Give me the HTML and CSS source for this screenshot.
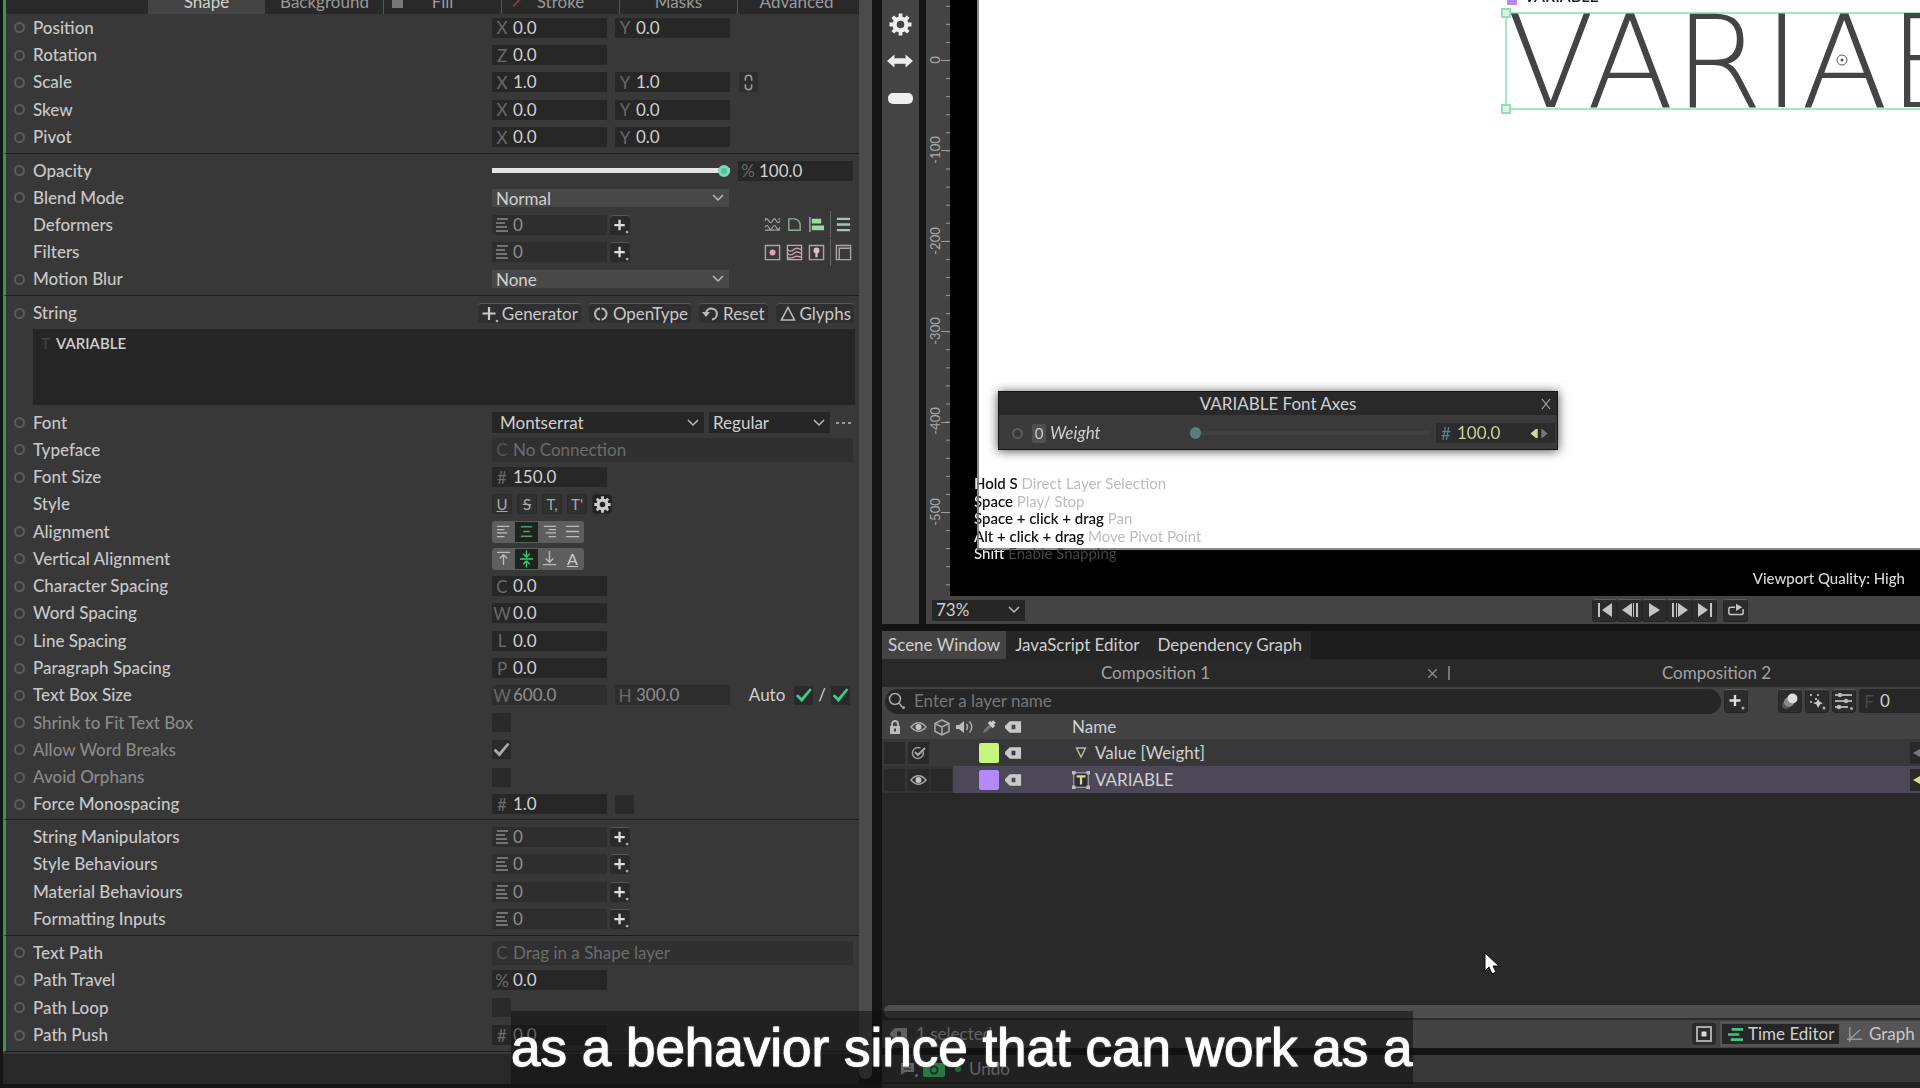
FILE: index.html
```html
<!DOCTYPE html>
<html lang="en">
<head>
<meta charset="utf-8">
<title>Scene – Composition 1</title>
<link rel="stylesheet" href="styles.css">
</head>
<body>
<svg class="sprite" aria-hidden="true">
  <symbol id="chevron" viewBox="0 0 12 8"><path d="M1 1l5 5 5-5" fill="none" stroke="#bbb" stroke-width="1.5"/></symbol>
  <symbol id="list" viewBox="0 0 14 14"><path d="M2 1h11M1 5h9M1 9h11M1 13h12" stroke="#8a8a8a" stroke-width="1.3"/></symbol>
  <symbol id="plus" viewBox="0 0 18 18"><path d="M8 3v11M2.500 8.500h11" stroke="#ddd" stroke-width="2.400"/><circle cx="16" cy="16" r="1.500" fill="#aaa"/></symbol>
  <symbol id="gear" viewBox="0 0 24 24"><g fill="none" stroke="currentColor"><circle cx="12" cy="12" r="6.200" stroke-width="4.500"/><path d="M12 0.500v4M12 19.500v4M0.500 12h4M19.500 12h4M3.900 3.900l2.800 2.800M17.300 17.300l2.800 2.800M20.100 3.900l-2.800 2.800M6.700 17.300l-2.800 2.800" stroke-width="4"/></g></symbol>
  <symbol id="tag" viewBox="0 0 18 12"><path fill-rule="evenodd" d="M5 0h12v12H5L0 7V5zM7 3.500v5h4v-5z" fill="#c9c9c9"/></symbol>
  <symbol id="eye" viewBox="0 0 18 12"><path d="M1 6Q9-3 17 6Q9 15 1 6z" fill="none" stroke="#aaa" stroke-width="1.500"/><circle cx="9" cy="6" r="3.200" fill="#c4c4c4"/></symbol>
</svg>

<div class="app">
  <aside class="inspector">
    <div class="inspector-main">
      <nav class="tabs">
        <span class="tab-spacer"></span>
        <button class="tab active">Shape</button>
        <button class="tab">Background</button>
        <button class="tab"><i class="sq"></i>Fill</button>
        <button class="tab"><i class="slash"></i>Stroke</button>
        <button class="tab">Masks</button>
        <button class="tab">Advanced</button>
      </nav>

      <section class="group five">
        <div class="row"><i class="dot"></i><label for="px">Position</label><div class="ctl"><span class="num"><b>X</b><input id="px" value="0.0"></span><span class="num"><b>Y</b><input aria-label="Position Y" value="0.0"></span></div></div>
        <div class="row"><i class="dot"></i><label for="rz">Rotation</label><div class="ctl"><span class="num"><b>Z</b><input id="rz" value="0.0"></span></div></div>
        <div class="row"><i class="dot"></i><label for="sx">Scale</label><div class="ctl"><span class="num"><b>X</b><input id="sx" value="1.0"></span><span class="num"><b>Y</b><input aria-label="Scale Y" value="1.0"></span><button class="link" aria-label="Link scale"><svg viewBox="0 0 10 18"><path d="M1.500 7V4.500a3.500 3.500 0 0 1 7 0V7M1.500 11v2.500a3.500 3.500 0 0 0 7 0V11" fill="none" stroke="#999" stroke-width="1.800"/></svg></button></div></div>
        <div class="row"><i class="dot"></i><label for="kx">Skew</label><div class="ctl"><span class="num"><b>X</b><input id="kx" value="0.0"></span><span class="num"><b>Y</b><input aria-label="Skew Y" value="0.0"></span></div></div>
        <div class="row"><i class="dot"></i><label for="vx">Pivot</label><div class="ctl"><span class="num"><b>X</b><input id="vx" value="0.0"></span><span class="num"><b>Y</b><input aria-label="Pivot Y" value="0.0"></span></div></div>
      </section>

      <section class="group five">
        <div class="row"><i class="dot"></i><label for="op">Opacity</label><div class="ctl"><input class="slider" id="op" type="range" value="100"><span class="num"><b>%</b><input aria-label="Opacity value" value="100.0"></span></div></div>
        <div class="row"><i class="dot"></i><label for="bm">Blend Mode</label><div class="ctl"><span class="pick light"><select id="bm"><option>Normal</option></select><svg class="chev"><use href="#chevron"/></svg></span></div></div>
        <div class="row"><i></i><label for="df">Deformers</label><div class="ctl"><span class="num off"><svg><use href="#list"/></svg><input id="df" value="0"></span><button class="add" aria-label="Add deformer"><svg><use href="#plus"/></svg></button>
          <span class="quick">
            <button aria-label="Wave"><svg viewBox="0 0 18 18"><path d="M1 5q2-4 4 0t4 0 4 0 4 0M1 3h2M15 3h2M1 12q2-4 4 0t4 0 4 0 4 0M1 15h16" fill="none" stroke="#9fa8a0" stroke-width="1.200"/></svg></button>
            <button aria-label="Bevel"><svg viewBox="0 0 18 18"><path d="M3 3h6q6 1 6 7v5H3z" fill="none" stroke="#93a895" stroke-width="1.500"/></svg></button>
            <button aria-label="Align"><svg viewBox="0 0 18 18"><path d="M2 1v16" stroke="#9db09f" stroke-width="1.500"/><path d="M4 3h10v5H4zM4 10h13v5H4z" fill="#9bdc9d"/></svg></button>
            <button class="split" aria-label="All deformers"><svg viewBox="0 0 18 18"><path d="M2 3h14M2 9h14M2 15h14" stroke="#a7c3af" stroke-width="2.400"/></svg></button>
          </span></div></div>
        <div class="row"><i></i><label for="fi">Filters</label><div class="ctl"><span class="num off"><svg><use href="#list"/></svg><input id="fi" value="0"></span><button class="add" aria-label="Add filter"><svg><use href="#plus"/></svg></button>
          <span class="quick">
            <button aria-label="Blur"><svg viewBox="0 0 18 18"><path d="M1.500 1.500h15v15h-15z" fill="none" stroke="#b3a0a5" stroke-width="1.500"/><circle cx="9" cy="9" r="3.200" fill="#dca4ae"/></svg></button>
            <button aria-label="Displace"><svg viewBox="0 0 18 18"><path d="M1.500 1.500h15v15h-15zM2 6q3 3 6 0t8 0M2 10q3 3 6 0t8 0M2 14q3 2 6 0t8 0" fill="none" stroke="#c9a4ad" stroke-width="1.400"/></svg></button>
            <button aria-label="Glow"><svg viewBox="0 0 18 18"><path d="M1.500 1.500h15v15h-15z" fill="none" stroke="#b3a0a5" stroke-width="1.500"/><circle cx="9" cy="7" r="3.200" fill="#e0bfc6"/><path d="M9 8v6" stroke="#e0bfc6" stroke-width="2.400"/></svg></button>
            <button class="split" aria-label="All filters"><svg viewBox="0 0 18 18"><path d="M1.500 1.500h15v15h-15zM4.500 16V4.500H16" fill="none" stroke="#ada3a6" stroke-width="1.500"/></svg></button>
          </span></div></div>
        <div class="row"><i class="dot"></i><label for="mb">Motion Blur</label><div class="ctl"><span class="pick light"><select id="mb"><option>None</option></select><svg class="chev"><use href="#chevron"/></svg></span></div></div>
      </section>

      <section class="group text">
        <div class="row string"><i class="dot"></i><label for="str">String</label>
          <div class="actions">
            <button><svg viewBox="0 0 18 18"><path d="M8 2v13M1.500 8.500h13" stroke="#ccc" stroke-width="2.200"/><circle cx="16" cy="16" r="1.300" fill="#aaa"/></svg>Generator</button>
            <button><svg viewBox="0 0 18 18"><path d="M8 3.500a5 5.500 0 1 0 0 11M9.500 3.500a5 5.500 0 0 1 0 11" fill="none" stroke="#bbb" stroke-width="2"/></svg>OpenType</button>
            <button><svg viewBox="0 0 18 18"><path d="M4 8a5.500 5.500 0 1 1 6 6.500" fill="none" stroke="#bbb" stroke-width="2"/><path d="M0 7h8l-4 5z" fill="#bbb"/></svg>Reset</button>
            <button><svg viewBox="0 0 18 18"><path d="M9 2.500L15.500 15h-13z" fill="none" stroke="#bbb" stroke-width="1.600"/></svg>Glyphs</button>
          </div></div>
        <div class="string-box"><span>T</span><textarea id="str">VARIABLE</textarea></div>
        <div class="rows">
          <div class="row"><i class="dot"></i><label for="fo">Font</label><div class="ctl tight"><span class="pick dark family"><select id="fo"><option>Montserrat</option></select><svg class="chev"><use href="#chevron"/></svg></span><span class="pick dark weight"><select aria-label="Font style"><option>Regular</option></select><svg class="chev"><use href="#chevron"/></svg></span><button class="more" aria-label="More fonts"><svg viewBox="0 0 16 4"><path d="M1 1h3v2H1zM7 1h3v2H7zM13 1h3v2h-3z" fill="#999"/></svg></button></div></div>
          <div class="row"><i class="dot"></i><label for="tf">Typeface</label><div class="ctl"><span class="num conn"><b>C</b><input id="tf" placeholder="No Connection"></span></div></div>
          <div class="row"><i class="dot"></i><label for="fs">Font Size</label><div class="ctl"><span class="num"><b>#</b><input id="fs" value="150.0"></span></div></div>
          <div class="row"><i></i><span class="name">Style</span><div class="ctl styles">
            <button><u>U</u></button><button><s>S</s></button><button>T,</button><button>T'</button><button class="set" aria-label="Style settings"><svg class="g"><use href="#gear"/></svg></button></div></div>
          <div class="row"><i class="dot"></i><span class="name">Alignment</span><div class="ctl"><span class="seg">
            <button aria-label="Left"><svg viewBox="0 0 16 14"><path d="M1 1.500h13M1 5h8M1 8.500h11M1 12.500h8"/></svg></button>
            <button class="on" aria-label="Centre"><svg viewBox="0 0 16 14"><path d="M2 2h12M4.500 7h7M2 12h12"/></svg></button>
            <button aria-label="Right"><svg viewBox="0 0 16 14"><path d="M2 1.500h13M7 5h8M4 8.500h11M7 12.500h8"/></svg></button>
            <button aria-label="Justify"><svg viewBox="0 0 16 14"><path d="M1 1.500h14M1 7h14M1 12.500h14"/></svg></button></span></div></div>
          <div class="row"><i class="dot"></i><span class="name">Vertical Alignment</span><div class="ctl"><span class="seg">
            <button aria-label="Top"><svg viewBox="0 0 16 16"><path d="M1 1.500h14M8 15V4M4 8l4-4 4 4"/></svg></button>
            <button class="on bright" aria-label="Middle"><svg viewBox="0 0 16 18"><path d="M1 9h14M8 0v7M8 18v-7M4.500 3.500L8 7l3.500-3.500M4.500 14.500L8 11l3.500 3.500"/></svg></button>
            <button aria-label="Bottom"><svg viewBox="0 0 16 16"><path d="M1 14.500h14M8 0v12M4 8l4 4 4-4"/></svg></button>
            <button><u>A</u></button></span></div></div>
          <div class="row"><i class="dot"></i><label for="cs">Character Spacing</label><div class="ctl"><span class="num"><b>C</b><input id="cs" value="0.0"></span></div></div>
          <div class="row"><i class="dot"></i><label for="ws">Word Spacing</label><div class="ctl"><span class="num"><b>W</b><input id="ws" value="0.0"></span></div></div>
          <div class="row"><i class="dot"></i><label for="ls">Line Spacing</label><div class="ctl"><span class="num"><b>L</b><input id="ls" value="0.0"></span></div></div>
          <div class="row"><i class="dot"></i><label for="ps">Paragraph Spacing</label><div class="ctl"><span class="num"><b>P</b><input id="ps" value="0.0"></span></div></div>
          <div class="row"><i class="dot"></i><label for="tw">Text Box Size</label><div class="ctl"><span class="num off"><b>W</b><input id="tw" value="600.0"></span><span class="num off"><b>H</b><input aria-label="Text box height" value="300.0"></span><span class="auto">Auto <input type="checkbox" class="green" aria-label="Auto width" checked>/<input type="checkbox" class="green" aria-label="Auto height" checked></span></div></div>
          <div class="row dim"><i class="dot"></i><label for="sh">Shrink to Fit Text Box</label><div class="ctl"><input type="checkbox" id="sh"></div></div>
          <div class="row dim"><i class="dot"></i><label for="aw">Allow Word Breaks</label><div class="ctl"><input type="checkbox" id="aw" checked></div></div>
          <div class="row dim"><i class="dot"></i><label for="ao">Avoid Orphans</label><div class="ctl"><input type="checkbox" id="ao"></div></div>
          <div class="row"><i class="dot"></i><label for="fm">Force Monospacing</label><div class="ctl"><span class="num"><b>#</b><input id="fm" value="1.0"></span><input type="checkbox" aria-label="Force monospacing on"></div></div>
        </div>
      </section>

      <section class="group four">
        <div class="row"><i></i><label for="sm">String Manipulators</label><div class="ctl"><span class="num off"><svg><use href="#list"/></svg><input id="sm" value="0"></span><button class="add" aria-label="Add string manipulator"><svg><use href="#plus"/></svg></button></div></div>
        <div class="row"><i></i><label for="sb">Style Behaviours</label><div class="ctl"><span class="num off"><svg><use href="#list"/></svg><input id="sb" value="0"></span><button class="add" aria-label="Add style behaviour"><svg><use href="#plus"/></svg></button></div></div>
        <div class="row"><i></i><label for="ma">Material Behaviours</label><div class="ctl"><span class="num off"><svg><use href="#list"/></svg><input id="ma" value="0"></span><button class="add" aria-label="Add material behaviour"><svg><use href="#plus"/></svg></button></div></div>
        <div class="row"><i></i><label for="fn">Formatting Inputs</label><div class="ctl"><span class="num off"><svg><use href="#list"/></svg><input id="fn" value="0"></span><button class="add" aria-label="Add formatting input"><svg><use href="#plus"/></svg></button></div></div>
      </section>

      <section class="group four">
        <div class="row"><i class="dot"></i><label for="tp">Text Path</label><div class="ctl"><span class="num conn"><b>C</b><input id="tp" placeholder="Drag in a Shape layer"></span></div></div>
        <div class="row"><i class="dot"></i><label for="pt">Path Travel</label><div class="ctl"><span class="num"><b>%</b><input id="pt" value="0.0"></span></div></div>
        <div class="row"><i class="dot"></i><label for="pl">Path Loop</label><div class="ctl"><input type="checkbox" id="pl"></div></div>
        <div class="row"><i class="dot"></i><label for="pp">Path Push</label><div class="ctl"><span class="num"><b>#</b><input id="pp" value="0.0"></span></div></div>
      </section>
      <div class="inspector-foot"></div>
    </div>
    <div class="scroll-v"></div>
  </aside>

  <main class="work">
    <section class="viewport">
      <div class="tools">
        <button aria-label="Settings"><svg width="23" height="23"><use href="#gear"/></svg></button>
        <button aria-label="Fit width"><svg width="26" height="16" viewBox="0 0 28 16"><path d="M0 8l8-7v4h12V1l8 7-8 7v-4H8v4z" fill="#eee"/></svg></button>
        <button aria-label="Background"><svg width="25" height="11" viewBox="0 0 25 11"><rect width="25" height="11" rx="5" fill="#eee"/></svg></button>
      </div>
      <div class="stage">
        <div class="stage-top">
          <svg class="ruler" width="24">
            <defs><pattern id="ticks" width="24" height="18.080" patternUnits="userSpaceOnUse" y="60"><path d="M20 .5h4" stroke="#999"/></pattern></defs>
            <rect width="24" height="590" fill="url(#ticks)"/>
            <path d="M15 60.500h9M15 150.500h9M15 241.500h9M15 331.500h9M15 422.500h9M15 512.500h9" stroke="#999"/>
            <g class="nums">
              <text transform="translate(14 60) rotate(-90)">0</text>
              <text transform="translate(14 150) rotate(-90)">-100</text>
              <text transform="translate(14 241) rotate(-90)">-200</text>
              <text transform="translate(14 331) rotate(-90)">-300</text>
              <text transform="translate(14 421) rotate(-90)">-400</text>
              <text transform="translate(14 512) rotate(-90)">-500</text>
            </g>
          </svg>
          <div class="canvas">
            <div class="artboard"></div>
            <div class="layer-tag"><i></i>VARIABLE</div>
            <div class="selection"><span class="word">VARIABLE</span><i class="h tl"></i><i class="h bl"></i><svg class="pivot" viewBox="0 0 12 12"><circle cx="6" cy="6" r="5" fill="none" stroke="#555"/><circle cx="6" cy="6" r="1.500" fill="#555"/></svg></div>
            <ul class="hints">
              <li><b>Hold S</b> Direct Layer Selection</li>
              <li><b>Space</b> Play/ Stop</li>
              <li><b>Space + click + drag</b> Pan</li>
              <li><b>Alt + click + drag</b> Move Pivot Point</li>
              <li><b>Shift</b> Enable Snapping</li>
            </ul>
            <div class="quality">Viewport Quality: High</div>
            <div class="axes">
              <header>VARIABLE Font Axes<button aria-label="Close"><svg viewBox="0 0 10 10"><path d="M1 0l8 10M9 0L1 10" stroke="#aaa" stroke-width="1.200"/></svg></button></header>
              <div class="axis"><i class="dot"></i><span class="key">0</span><label for="wg">Weight</label><input id="wg" type="range" value="0"><span class="num"><b>#</b><input aria-label="Weight value" value="100.0"><svg viewBox="0 0 20 10"><path d="M8 0v10H6L0 5l6-5z" fill="#d5d896"/><path d="M12 0v10h1l6-5-6-5z" fill="#777"/></svg></span></div>
            </div>
          </div>
        </div>
        <div class="transport">
          <span class="pick dark zoom"><select aria-label="Zoom"><option>73%</option></select><svg class="chev"><use href="#chevron"/></svg></span>
          <div class="play">
            <button aria-label="First frame"><svg viewBox="0 0 16 14"><path d="M1 0h2v14H1zM15 0v14L5 7z"/></svg></button>
            <button aria-label="Previous frame"><svg viewBox="0 0 16 14"><path d="M10 0v14L0 7zM11 0h1v14h-1zM14 0h2v14h-2z"/></svg></button>
            <button aria-label="Play"><svg viewBox="0 0 16 14"><path d="M2 0v14l11-7z"/></svg></button>
            <button aria-label="Next frame"><svg viewBox="0 0 16 14"><path d="M6 0v14l10-7zM0 0h2v14H0zM4 0h1v14H4z"/></svg></button>
            <button aria-label="Last frame"><svg viewBox="0 0 16 14"><path d="M13 0h2v14h-2zM1 0v14l10-7z"/></svg></button>
            <button class="loop" aria-label="Loop"><svg viewBox="0 0 18 14"><path d="M8 4H3q-2 0-2 2v4q0 2 2 2h12q2 0 2-2V6" fill="none" stroke="#c4c4c4" stroke-width="1.700"/><path d="M9 0l7 4-7 4z"/></svg></button>
          </div>
        </div>
      </div>
    </section>

    <section class="scene">
      <nav class="panels"><button class="active">Scene Window</button><button>JavaScript Editor</button><button>Dependency Graph</button></nav>
      <nav class="comps"><button>Composition 1<svg viewBox="0 0 9 9"><path d="M0 0l9 9M9 0L0 9" stroke="#888" stroke-width="1.500"/></svg></button><button>Composition 2</button></nav>
      <div class="search">
        <div class="search-box"><svg viewBox="0 0 18 18"><circle cx="7" cy="7" r="5.500" fill="none" stroke="#aaa" stroke-width="1.500"/><path d="M11 11l3 4" stroke="#aaa" stroke-width="1.500"/><circle cx="15.500" cy="15.500" r="1.500" fill="#aaa"/></svg><input placeholder="Enter a layer name" aria-label="Layer name"></div>
        <button class="tool" aria-label="Add layer"><svg><use href="#plus"/></svg></button>
        <button class="tool first" aria-label="Motion blur"><svg viewBox="0 0 18 18"><circle cx="5" cy="13" r="4" fill="#555"/><circle cx="8" cy="10" r="5" fill="#888"/><circle cx="11.500" cy="6.500" r="5" fill="#ddd"/></svg></button>
        <button class="tool" aria-label="Snapping"><svg viewBox="0 0 18 18"><path d="M2 2h2v2H2zM9 2h2v2H9zM2 9h2v2H2zM7 6h2v2H7z" fill="#aaa"/><path d="M10 7l2 3 3 1-3 1.500-2 3.500-1.500-3.500L5 11l3.500-1z" fill="#ccc"/><circle cx="16" cy="16" r="1.500" fill="#aaa"/></svg></button>
        <button class="tool" aria-label="Filter options"><svg viewBox="0 0 18 18"><path d="M0 3h17M0 9h17M0 15h13" stroke="#aaa" stroke-width="1.800"/><circle cx="5" cy="3" r="2.200" fill="#bbb"/><circle cx="11" cy="9" r="2.200" fill="#bbb"/><circle cx="4" cy="15" r="2.200" fill="#bbb"/><circle cx="16.500" cy="16.500" r="1.500" fill="#aaa"/></svg></button>
        <span class="num frame"><b>F</b><input aria-label="Frame" value="0"></span>
      </div>
      <table class="layers">
        <colgroup><col class="c1"><col class="c2"><col class="c2"><col class="c"><col class="c"><col class="c"><col><col class="end"></colgroup>
        <thead><tr>
          <th><svg width="12" height="14" viewBox="0 0 12 14"><path d="M1 6h10v8H1z" fill="#bbb"/><path d="M3 6V4a3 3 0 0 1 6 0v2" fill="none" stroke="#bbb" stroke-width="1.800"/><path d="M5 8.500h2v3H5z" fill="#444"/></svg></th>
          <th><svg width="17" height="12"><use href="#eye"/></svg></th>
          <th><svg width="16" height="17" viewBox="0 0 16 17"><path d="M8 1l7 3.500v8L8 16l-7-3.500v-8zM1 4.500L8 8l7-3.500M8 8v8" fill="none" stroke="#aaa" stroke-width="1.500"/></svg></th>
          <th><svg width="18" height="14" viewBox="0 0 18 14"><path d="M0 5h3l5-4v12L3 9H0z" fill="#bbb"/><path d="M10.500 4q2 3 0 6M13.500 1.500q4.500 5.500 0 11" fill="none" stroke="#aaa" stroke-width="1.500"/></svg></th>
          <th><svg width="16" height="16" viewBox="0 0 16 16"><path d="M2 14l1-3 6-6 2 2-6 6z" fill="#777"/><path d="M8 3l5 5M10.500 5.500L13.500 2.500" stroke="#ccc" stroke-width="3.500"/></svg></th>
          <th><svg width="17" height="12"><use href="#tag"/></svg></th>
          <th class="nm">Name</th><th></th></tr></thead>
        <tbody>
          <tr><td><i class="cell"></i></td><td><i class="cell"><svg width="15" height="14" viewBox="0 0 15 14"><path d="M12 5A5.500 5.500 0 1 1 9.500 2.200" fill="none" stroke="#999" stroke-width="1.500"/><path d="M4 6l3 3 7-7" fill="none" stroke="#aaa" stroke-width="2"/></svg></i></td><td></td><td></td><td><i class="sw lime"></i></td><td><svg width="17" height="12"><use href="#tag"/></svg></td><td class="nm"><svg class="ic" viewBox="0 0 18 18"><path d="M4.500 4h9L9 13z" fill="none" stroke="#b7b79b" stroke-width="1.500"/></svg>Value [Weight]</td><td><i class="cell key"><svg width="9" height="10" viewBox="0 0 9 10"><path d="M9 0v10L0 5z" fill="#777"/></svg></i></td></tr>
          <tr class="sel"><td><i class="cell"></i></td><td><i class="cell"><svg width="17" height="12"><use href="#eye"/></svg></i></td><td><i class="cell"></i></td><td></td><td><i class="sw violet"></i></td><td><svg width="17" height="12"><use href="#tag"/></svg></td><td class="nm"><svg class="ic" viewBox="0 0 20 20"><rect x="2" y="2" width="16" height="16" fill="#2d2b33" stroke="#aaa" stroke-width="1.300"/><path d="M0 0h4v4H0zM16 0h4v4h-4zM0 16h4v4H0zM16 16h4v4h-4z" fill="#bbb"/><path d="M5 6h10M10 6v9" stroke="#d9da8e" stroke-width="2.500"/></svg>VARIABLE</td><td><i class="cell key"><svg width="9" height="10" viewBox="0 0 9 10"><path d="M9 0v10L0 5z" fill="#d5d896"/></svg></i></td></tr>
        </tbody>
      </table>
      <div class="empty"></div>
      <div class="scroll-h"></div>
      <div class="status">
        <svg width="18" height="12"><use href="#tag"/></svg><span>1 selected</span>
        <button class="frame-btn" aria-label="Frame selection"><svg viewBox="0 0 18 18"><path d="M2 2h14v14H2z" fill="none" stroke="#aaa" stroke-width="2"/><path d="M6.500 6.500h5v5h-5z" fill="#ddd"/></svg></button>
        <div class="modes"><button class="active"><svg viewBox="0 0 16 14"><path d="M4 1.500h12M0 7h12M3 12.500h13" stroke="#4cc07e" stroke-width="2.800"/></svg>Time Editor</button><button><svg viewBox="0 0 16 16"><path d="M3 0v16M0 13h16M3 13L14 3" fill="none" stroke="#999" stroke-width="1.500"/></svg>Graph</button></div>
      </div>
    </section>

    <footer class="bottom">
      <svg width="18" height="16" viewBox="0 0 18 16"><path d="M1 2h13v9H5l-4 3z" fill="#ccc"/><path d="M4 5h7M4 8h7" stroke="#333"/><circle cx="16.500" cy="14.500" r="1.500" fill="#ccc"/></svg>
      <svg width="22" height="17" viewBox="0 0 22 17"><rect y="3" width="22" height="14" rx="2" fill="#4dff8a"/><circle cx="11" cy="10" r="3.500" fill="none" stroke="#1d6b3a" stroke-width="2"/></svg>
      <i></i><span>Undo</span>
    </footer>
  </main>
</div>

<svg class="pointer" width="16" height="24" viewBox="0 0 16 24"><path d="M1 1v18l4-4 3 7 4-2-3-6h6z" fill="#fff" stroke="#111"/></svg>
<p class="caption">as a behavior since that can work as a</p>
</body>
</html>
```
FILE: styles.css
```css
* { box-sizing: border-box; }
body {
  margin: 0;
  background: #141414;
  color: #c8c8c8;
  font: 17px/20px Lato, "Noto Sans", sans-serif;
  overflow: hidden;
}
button, input, select, textarea {
  margin: 0;
  padding: 0;
  border: 0;
  border-radius: 0;
  background: none;
  color: inherit;
  font: inherit;
  outline: 0;
  appearance: none;
}
button { display: flex; align-items: center; justify-content: center; white-space: nowrap; }
input, select { min-width: 0; flex: 1; }
i { font-style: normal; }
svg { display: block; flex: none; }
.sprite { position: absolute; width: 0; height: 0; }

.app {
  display: grid;
  grid-template-columns: 882fr 1038fr;
  height: 100vh;
}

/* Inspector */
.inspector { display: flex; padding: 0 10px 4px 3px; min-width: 0; min-height: 0; }
.inspector-main {
  flex: 1;
  min-width: 0;
  display: flex;
  flex-direction: column;
  background: #383838;
}
.scroll-v { width: 13px; margin-bottom: 5px; background: #4b4b4b; border-radius: 0 0 6px 6px; }
.tabs {
  display: flex;
  align-items: flex-end;
  height: 14px;
  flex: none;
  overflow: hidden;
  padding-right: 4px;
  background: #292929;
  border-left: 3px solid #3f9159;
}
.tab-spacer { width: 141px; }
.tab { position: relative; flex: 1; height: 24px; color: #999; border-left: 1px solid #292929; }
.tab + .tab + .tab { border-left-color: #555; }
.tab.active { background: #444; color: #d0d0d0; }
.tab .sq, .tab .slash { position: absolute; left: 8px; bottom: 6px; width: 11px; height: 11px; background: #777; }
.tab .slash { width: 2px; left: 14px; background: #744; transform: rotate(45deg); }

.group {
  display: grid;
  grid-auto-rows: 1fr;
  padding: 3px 4px 2px 8px;
  border-left: 3px solid #3f9159;
  border-bottom: 1px solid #1e1e1e;
}
.group.five { min-height: 142px; }
.tabs + .group.five { min-height: 140px; padding-top: 0; }
.group.four { min-height: 116px; }
.group.text { display: block; padding-bottom: 1px; }
.rows { display: grid; grid-auto-rows: 1fr; height: 409px; margin-top: 4px; }

.row {
  display: grid;
  grid-template-columns: 19px minmax(0, 1fr) 363px;
  align-items: center;
}
.row label, .row .name { font-weight: 500; }
.row.string { grid-template-columns: 19px minmax(0, 1fr) auto; height: 30px; padding-bottom: 2px; }
.row.dim label { color: #8a8a8a; }
.dot { width: 11px; height: 11px; border: 2px solid #5c5c5c; border-radius: 50%; }
.ctl { display: flex; align-items: center; gap: 8px; }
.ctl.tight { gap: 5px; }

.num {
  display: flex;
  align-items: center;
  flex: none;
  width: 115px;
  height: 20px;
  background: #272727;
  color: #d0d0d0;
}
.num b { width: 20px; flex: none; text-align: center; font-weight: 400; color: #6a6a6a; line-height: 19px; }
.num input { width: 0; height: 20px; padding-left: 1px; }
.num svg { width: 14px; height: 14px; margin: 0 3px; }
.num.off { background: #2e2e2e; color: #8f8f8f; }
.num.conn { width: 361px; height: 24px; background: #303030; }
.num.conn b { color: #555; }
.num.conn input::placeholder { color: #6c6c6c; opacity: 1; }
.link { width: 19px; height: 20px; background: #2d2d2d; margin-left: 1px; }
.link svg { width: 9px; height: 17px; }
.add { width: 20px; height: 20px; margin-left: -5px; background: #2a2a2a; border-radius: 3px; border-top: 1px solid #555; }
.add svg { width: 17px; height: 17px; }
.quick { display: flex; gap: 5px; margin-left: auto; padding-right: 3px; align-items: center; }
.quick button { width: 17px; height: 27px; }
.quick svg { width: 17px; height: 17px; }
.quick .split { width: 22px; border-left: 1px solid #666; padding-left: 4px; }

.slider { flex: none; width: 238px; height: 13px; background: linear-gradient(#e4e4e4, #e4e4e4) center / 100% 5px no-repeat; }
.slider::-webkit-slider-thumb { appearance: none; width: 12px; height: 12px; border-radius: 50%; background: #4fc3a1; border: 3px solid #7fd6bb; }

.pick { position: relative; display: flex; flex: none; align-items: center; }
.pick select { width: 100%; height: 100%; padding-left: 4px; }
.pick .chev { position: absolute; right: 5px; width: 12px; height: 8px; }
.pick.light { width: 237px; height: 18px; background: #484848; color: #d0d0d0; }
.pick.dark { height: 21px; background: #262626; color: #d0d0d0; }
.family { width: 212px; }
.weight { width: 121px; }
.more svg { width: 16px; height: 4px; }

.actions { display: flex; gap: 8px; margin-right: 1px; }
.actions button { height: 20px; gap: 3px; padding: 0 3px; background: #2f2f2f; border-top: 1px solid #555; border-radius: 3px; }
.actions svg { width: 18px; height: 18px; }
.string-box { display: flex; height: 76px; margin-left: 19px; padding: 4px 8px; background: #262626; font-size: 15px; color: #d0d0d0; }
.string-box span { width: 15px; color: #444; }
.string-box textarea { flex: 1; resize: none; overflow: hidden; font-weight: 600; }

.ctl.styles { gap: 5px; }
.styles button { width: 20px; height: 20px; background: #303030; border: 1px solid #2a2a2a; border-radius: 3px; color: #aaa; font-size: 15px; }
.styles .set { background: #222; color: #ccc; }
.styles svg { width: 17px; height: 17px; }
.seg { display: flex; padding: 1px 0; height: 22px; background: #5e5e5e; border-radius: 3px; }
.seg button { width: 23px; color: #ccc; font-size: 16px; }
.seg .on { background: #1d2420; }
.seg svg { width: 15px; height: 15px; fill: none; stroke: #bbb; stroke-width: 1.5; }
.seg .on svg { stroke: #4f9a70; }
.seg .bright svg { stroke: #3fc878; height: 18px; }

input[type="checkbox"] { flex: none; width: 19px; height: 19px; background: #2a2a2a; display: grid; place-items: center; }
input[type="checkbox"]:checked::before { content: ""; width: 16px; height: 14px; background: #aaa; clip-path: polygon(0 55%, 13% 42%, 36% 68%, 88% 0, 100% 10%, 38% 100%); }
input.green:checked::before { background: #3ecb83; }
.auto { display: flex; align-items: center; gap: 5px; margin: 0 5px 0 auto; color: #d0d0d0; }
.auto input:first-child { margin-left: 4px; }
.inspector-foot { flex: 1; border-top: 2px solid #3a3a3a; background: #282828; }

/* Viewport */
.work { display: grid; grid-template-rows: 624fr 417fr 33px; gap: 7px; min-width: 0; min-height: 0; }
.viewport { display: flex; gap: 7px; min-height: 0; }
.tools { display: flex; flex-direction: column; align-items: center; flex: none; gap: 17px; width: 37px; padding: 14px 1px 0 0; background: #444; color: #eee; }
.tools button { height: 20px; }
.stage { flex: 1; min-width: 0; display: flex; flex-direction: column; background: #444; }
.stage-top { flex: 1; min-height: 0; display: flex; }
.ruler { height: 100%; }
.nums { fill: #aaa; font-size: 13px; text-anchor: middle; }
.canvas { position: relative; flex: 1; min-width: 0; overflow: hidden; background: #000; display: flex; isolation: isolate; }
.artboard { flex: 1; margin: 0 0 46px 27px; background: #fff; border: solid #8c8c8c; border-width: 0 0 2px 2px; }
.layer-tag { position: absolute; left: 557px; top: -14px; display: flex; align-items: center; gap: 7px; color: #222; font-size: 16px; font-weight: 600; }
.layer-tag i { width: 10px; height: 10px; margin-top: 7px; background: #b18cf5; }
.selection { position: absolute; left: 555px; top: 12px; width: 674px; height: 98px; border: 2px solid #a5e8c3; }
.word { position: absolute; left: 0; top: -29px; font: 200 128px/156px "DejaVu Sans", Lato, sans-serif; color: #444; }
.h { position: absolute; left: -6px; width: 10px; height: 10px; background: #d8f8e6; border: 2px solid #93dfb5; }
.h.tl { top: -6px; }
.h.bl { bottom: -6px; }
.pivot { position: absolute; left: 329px; top: 40px; width: 12px; height: 12px; }
.hints { position: absolute; left: 24px; top: 475px; height: 88px; margin: 0; padding: 0; display: grid; grid-auto-rows: 1fr; list-style: none; font-size: 15px; line-height: 17px; color: #444; mix-blend-mode: difference; }
.hints b { color: #eee; font-weight: 500; }
.quality { position: absolute; right: 15px; bottom: 8px; font-size: 15px; font-weight: 500; color: #d8d8d8; }
.axes { position: absolute; left: 48px; top: 391px; width: 560px; height: 59px; background: #3a3a3a; border: 1px solid #161616; box-shadow: 0 1px 10px rgba(0, 0, 0, .7); }
.axes header { position: relative; height: 23px; background: #292929; text-align: center; line-height: 24px; color: #d0d0d0; }
.axes header button { position: absolute; right: 6px; top: 6px; }
.axes header svg { width: 10px; height: 12px; }
.axis { display: flex; align-items: center; height: 36px; padding: 0 2px 0 13px; }
.axis .key { width: 14px; margin: 0 4px 0 9px; background: #505050; border-radius: 2px; text-align: center; font-size: 15px; line-height: 19px; color: #ccc; }
.axis label { width: 140px; font-style: italic; color: #d0d0d0; }
.axis input[type="range"] { height: 12px; margin-right: 7px; background: linear-gradient(#414141, #414141) center / 100% 4px no-repeat; }
.axis input[type="range"]::-webkit-slider-thumb { appearance: none; width: 11px; height: 12px; border-radius: 50%; background: #55807a; }
.axis .num { width: 119px; background: #2c2c2c; color: #d0d29a; }
.axis .num b { color: #5d7f90; }
.axis .num svg { width: 19px; height: 9px; margin-right: 6px; }

.transport { display: flex; align-items: center; justify-content: space-between; height: 28px; padding: 0 172px 0 6px; }
.zoom { width: 93px; }
.play { display: flex; }
.play button { width: 25px; height: 23px; background: #2c2c2c; border: 1px solid #262626; border-top-color: #606060; border-radius: 3px; }
.play .loop { margin-left: 6px; }
.play svg { width: 16px; height: 14px; fill: #c4c4c4; }

/* Scene */
.scene { display: flex; flex-direction: column; min-width: 0; min-height: 0; overflow: hidden; background: #292929; }
.panels { display: flex; height: 28px; flex: none; background: #1c1c1c; color: #d0d0d0; }
.panels button { padding: 0 9px; background: #262626; }
.panels .active { padding: 0 6px; background: #444; }
.comps { display: flex; height: 28px; flex: none; color: #a2a2a2; }
.comps button { position: relative; flex: none; width: 561px; padding-right: 14px; }
.comps button:first-child::after { content: ""; position: absolute; right: -7px; width: 2px; height: 14px; background: #777; }
.comps svg { position: absolute; right: 6px; width: 9px; height: 9px; }
.search { display: flex; flex: none; align-items: center; height: 28px; padding-left: 3px; background: #424242; gap: 3px; }
.search-box { display: flex; flex: 1; align-items: center; height: 25px; padding-left: 3px; gap: 8px; background: #262626; border-radius: 13px; }
.search-box svg { width: 18px; height: 18px; }
.search-box input::placeholder { color: #777; opacity: 1; }
.tool { width: 24px; height: 24px; background: #2c2c2c; border: 1px solid #262626; border-top-color: #5a5a5a; border-radius: 4px; }
.tool svg { width: 18px; height: 18px; }
.tool.first { margin-left: 27px; }
.frame { width: 61px; height: 24px; border-radius: 3px 0 0 3px; }
.frame b { color: #484848; }

.layers { width: 100%; flex: none; table-layout: fixed; border-collapse: collapse; color: #d0d0d0; }
.c1 { width: 25px; }
.c2 { width: 23px; }
.c { width: 24px; }
.end { width: 10px; }
.layers tr { height: 27px; background: #383838; }
.layers thead tr { height: 24px; background: #434343; }
.layers th, .layers td { padding: 0; font-weight: 400; }
.layers svg, .sw { margin: 0 auto; }
.layers .nm { padding-left: 47px; text-align: left; }
.layers td.nm .ic { display: inline-block; width: 18px; height: 18px; margin-right: 5px; vertical-align: -3px; }
.layers .sel { background: #4c4858; }
.sel td:nth-child(-n+3) { background: #333; }
.cell { display: flex; align-items: center; width: 21px; height: 22px; margin: 0 auto; background: #292929; }
.cell.key { width: 10px; overflow: hidden; }
.cell.key svg { margin: 0 0 0 3px; }
.sw { display: block; width: 20px; height: 20px; border-radius: 2px; }
.lime { background: #c8f57e; }
.violet { background: #b488fa; }
.empty { flex: 1; }
.scroll-h { height: 13px; flex: none; margin-left: 2px; background: #4e4e4e; border-radius: 6px 0 0 6px; }
.status { display: flex; flex: none; align-items: center; height: 30px; padding-left: 8px; background: #434343; border-top: 2px solid #2c2c2c; }
.status > span { margin-left: 8px; }
.frame-btn { width: 24px; height: 22px; margin-left: auto; background: #2b2b2b; border-radius: 3px; }
.frame-btn svg { width: 18px; height: 18px; }
.modes { display: flex; margin-left: 4px; padding: 3px 0 3px 2px; background: #555; }
.modes button { flex: none; width: 81px; height: 20px; gap: 7px; padding: 0 8px; justify-content: flex-start; }
.modes .active { width: 117px; padding: 0 6px; background: #262626; gap: 5px; color: #d0d0d0; }
.modes svg { width: 15px; height: 15px; }

.bottom { display: flex; align-items: center; padding: 0 18px; background: #383838; border-bottom: 6px solid #222; }
.bottom svg + svg { margin-left: 5px; }
.bottom i { width: 6px; height: 6px; margin: 0 8px 0 10px; border-radius: 50%; background: #3fd47c; }

/* Overlays */
.pointer { position: absolute; left: 1484px; top: 952px; }
.caption {
  position: absolute;
  left: 511px;
  top: 1011px;
  height: 73px;
  margin: 0;
  background: rgba(16, 16, 16, .56);
  color: #fff;
  font: 53px/74px "Liberation Sans", Arial, sans-serif;
  -webkit-text-stroke: 1px #fff;
  text-shadow: 0 0 2px #999, 0 0 2px #777;
  white-space: nowrap;
}
.pick.family select { padding-left: 4px; margin-left: 4px; }
```
